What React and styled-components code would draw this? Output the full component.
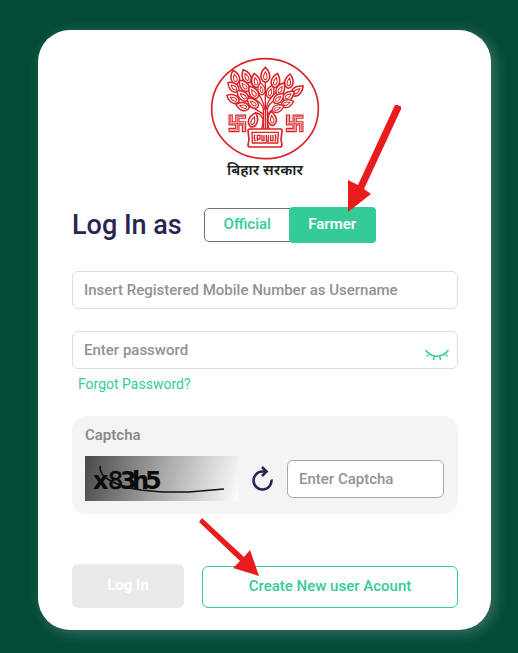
import React from "react";
import styled, { createGlobalStyle } from "styled-components";

const green = "#35cb99";
const navy = "#27264e";
const red = "#e81c1c";

const GlobalStyle = createGlobalStyle`
  *, *::before, *::after { box-sizing: border-box; }
  body {
    margin: 0;
    background: #044b37;
    font-family: Roboto, "Liberation Sans", sans-serif;
    font-size: 15px;
  }
  button, input { font: inherit; margin: 0; }
`;

const Page = styled.div`
  min-height: 100vh;
  padding: 30px 27px 23px 38px;
`;

const Card = styled.form`
  padding: 27px 33px 22px 34px;
  border-radius: 32px;
  background: #fff;
  box-shadow: 4px 3px 14px rgba(255, 255, 255, 0.22);
`;

const Brand = styled.div`
  display: flex;
  flex-direction: column;
  align-items: center;
  height: 150px;
`;

const BrandName = styled.div`
  font: 600 15px/22px "Noto Sans Devanagari", "Noto Sans", sans-serif;
  color: #222;
`;

const Header = styled.div`
  display: flex;
  align-items: center;
  gap: 22px;
  height: 36px;
  margin-bottom: 28px;
`;

const Title = styled.h1`
  margin: 0;
  font-size: 27px;
  font-weight: 500;
  line-height: 32px;
  color: ${navy};
`;

const Tabs = styled.div`
  display: flex;
  align-items: center;
`;

const Anchor = styled.div`
  position: relative;
  display: flex;
  flex: ${(p) => (p.$grow ? 1 : "none")};
`;

const Tab = styled.button`
  width: 87px;
  height: ${(p) => (p.$active ? 36 : 34)}px;
  margin-left: ${(p) => (p.$active ? -2 : 0)}px;
  padding: 0 0 2px;
  border: ${(p) => (p.$active ? "0" : "1px solid #707070")};
  border-radius: ${(p) => (p.$active ? "4px" : "5px 0 0 5px")};
  background: ${(p) => (p.$active ? green : "#fff")};
  color: ${(p) => (p.$active ? "#fff" : green)};
  font-weight: ${(p) => (p.$active ? 600 : 500)};
`;

const Field = styled.div`
  position: relative;
  margin-bottom: ${(p) => p.$gap || 0}px;
`;

const TextInput = styled.input`
  display: block;
  width: 100%;
  min-width: 0;
  height: 38px;
  padding: 0 11px;
  border: 1px solid ${(p) => (p.$dark ? "#a9a9a9" : "#dedede")};
  border-radius: 6px;
  background: #fff;
  font-weight: 500;
  color: #444;
  &::placeholder { color: #929292; opacity: 1; }
`;

const EyeButton = styled.button`
  position: absolute;
  right: 9px;
  top: 18px;
  display: flex;
  padding: 0;
  border: 0;
  background: none;
`;

const Forgot = styled.a`
  display: block;
  width: fit-content;
  margin: 5px 0 22px 6px;
  font-size: 14px;
  line-height: 20px;
  color: ${green};
  text-decoration: none;
`;

const CaptchaPanel = styled.div`
  padding: 9px 14px 13px 13px;
  border-radius: 14px;
  background: #f4f4f4;
  margin-bottom: 50px;
`;

const CaptchaLabel = styled.label`
  display: block;
  margin-bottom: 11px;
  font-weight: 600;
  line-height: 20px;
  color: #8b8b8b;
`;

const CaptchaRow = styled.div`
  display: flex;
  align-items: center;
`;

const CaptchaImage = styled.div`
  flex: none;
  width: 153px;
  height: 45px;
  background: linear-gradient(105deg, #484848, #a8a8a8 50%, #fcfcfc);
`;

const RefreshButton = styled.button`
  display: flex;
  margin: 0 13px;
  padding: 0;
  border: 0;
  background: none;
`;

const Actions = styled.div`
  display: flex;
  align-items: flex-end;
  gap: 18px;
`;

const LoginButton = styled.button`
  width: 112px;
  height: 44px;
  padding: 0 0 2px;
  border: 0;
  border-radius: 6px;
  background: #eaeaea;
  color: #fff;
  font-weight: 600;
`;

const CreateButton = styled.button`
  width: 100%;
  height: 42px;
  padding: 0 0 2px;
  border: 1px solid ${green};
  border-radius: 6px;
  background: #fff;
  color: ${green};
  font-weight: 500;
`;

const Pointer = styled.svg`
  position: absolute;
  left: ${(p) => p.$left}px;
  bottom: ${(p) => p.$bottom}px;
  pointer-events: none;
`;

const leaves = [
  [194, 76, 0, 1.1], [165, 93, -12, 1.05], [225, 93, 14, 1.05],
  [137, 80, -25, 1.05], [265, 95, 8, 1.05], [103, 83, -15, 1.05],
  [98, 112, -50, 1], [130, 108, -40, 1], [97, 147, -62, 1],
  [126, 138, -50, 1.05], [158, 128, -32, 1.05], [182, 118, -10, 0.9],
  [209, 126, 16, 0.95], [240, 118, 28, 1], [290, 123, 52, 1.05],
  [264, 138, 52, 1], [234, 146, 48, 0.95], [260, 161, 72, 0.95],
  [126, 170, -75, 1], [156, 160, -50, 1], [232, 176, 68, 0.9],
  [158, 211, 18, 1.1], [214, 207, -8, 1.05],
];

function Sign({ x, y }) {
  const d = "M-20-20V0H20V20M20-20H0V20H-20";
  return (
    <g transform={`translate(${x} ${y})`} fill="none" strokeLinecap="square">
      <path d={d} stroke="#d92326" strokeWidth="13" />
      <path d={d} stroke="#fff" strokeWidth="6" />
      <path d={d} stroke="#d92326" strokeWidth="2.5" />
    </g>
  );
}

function Emblem() {
  return (
    <svg width="110" height="104" viewBox="28 22 330 312" role="img" aria-label="Emblem">
      <ellipse cx="193" cy="177" rx="160" ry="150" fill="#fff" stroke="#d92326" strokeWidth="5" />
      <g fill="none" stroke="#d92326" strokeWidth="4" strokeLinecap="round">
        <path d="M188 238V180Q186 160 160 148L110 120M200 238V182Q202 160 228 150L282 128" />
        <path d="M188 195Q170 175 105 158M200 195Q218 172 258 162" />
        <path d="M191 178Q191 150 145 92M197 178Q197 145 258 104M194 238V92" />
        <path d="M188 210Q178 190 168 190M200 210Q210 194 214 190M182 238Q188 226 187 205M206 238Q200 226 201 205" />
      </g>
      <g fill="#fff" stroke="#d92326" strokeWidth="4.5">
        {leaves.map(([x, y, a, s]) => (
          <g key={`${x}-${y}`} transform={`translate(${x} ${y}) rotate(${a}) scale(${s})`}>
            <path d="M0-21C11-11 15 3 10 12Q6 19 0 20Q-6 19-10 12C-15 3-11-11 0-21Z" />
            <path d="M0-9Q8 4 3 11Q0 14-3 11Q-8 4 0-9Z" strokeWidth="3" />
          </g>
        ))}
      </g>
      <Sign x={110} y={221} />
      <Sign x={282} y={221} />
      <g fill="#fff" stroke="#d92326" strokeWidth="5">
        <path d="M142 242Q142 238 147 238H240Q245 238 244 243L241 270L244 286Q244 292 238 292H148Q142 292 142 286L145 270Z" />
        <path d="M154 248H233L231 280H155Z" strokeWidth="4" />
        <path
          d="M163 255Q158 264 164 275M170 274V257H178V268H170M184 256V273H190V257M197 256V274H203V257M210 256V273H217V256M223 254Q229 264 222 276"
          fill="none"
          strokeWidth="4"
        />
      </g>
    </svg>
  );
}

function ClosedEye() {
  return (
    <svg width="24" height="12" viewBox="0 0 24 12" fill="none" stroke={green} strokeWidth="1.5" strokeLinecap="round">
      <path d="M1 1.5C6 9 18 9 23 1.5M4.5 4.5L2 7M9.5 7L8.5 10.5M14.5 7L15.5 10.5M19.5 4.5L22 7" />
    </svg>
  );
}

function RefreshIcon() {
  return (
    <svg width="23" height="26" viewBox="0 0 23 26" fill="none" stroke={navy} strokeWidth="2.6">
      <path d="M20.5 13.5A9 9 0 1 1 11.5 5.5H15" />
      <path d="M11 1L15.5 5.5L11 10" />
    </svg>
  );
}

export default function App() {
  return (
    <>
      <GlobalStyle />
      <Page>
        <Card onSubmit={(e) => e.preventDefault()}>
          <Brand>
            <Emblem />
            <BrandName lang="hi">बिहार सरकार</BrandName>
          </Brand>
          <Header>
            <Title>Log In as</Title>
            <Tabs>
              <Tab type="button">Official</Tab>
              <Anchor>
                <Tab type="button" $active>Farmer</Tab>
                <Pointer $left={54} $bottom={30} width="56" height="110" viewBox="0 0 56 110" fill={red}>
                  <path d="M52.5 1L57 3L19 85L26 90L3 108V76L13 81L50 1Z" transform="translate(0 1)" />
                </Pointer>
              </Anchor>
            </Tabs>
          </Header>
          <Field $gap={22}>
            <TextInput aria-label="Username" placeholder="Insert Registered Mobile Number as Username" />
          </Field>
          <Field>
            <TextInput type="password" aria-label="Password" placeholder="Enter password" />
            <EyeButton type="button" aria-label="Show password">
              <ClosedEye />
            </EyeButton>
          </Field>
          <Forgot href="#forgot">Forgot Password?</Forgot>
          <CaptchaPanel>
            <CaptchaLabel htmlFor="captcha">Captcha</CaptchaLabel>
            <CaptchaRow>
              <CaptchaImage>
                <svg width="153" height="45" viewBox="0 0 153 45">
                  <g fontFamily="DejaVu Sans, sans-serif" fontSize="24" fill="#0b0b0b">
                    <text x="8" y="33" fontWeight="700">x</text>
                    <text x="23" y="33" stroke="#0b0b0b" strokeWidth="0.6">8</text>
                    <text x="35" y="33" fontWeight="700">3</text>
                    <text x="47" y="33" fontWeight="700">h</text>
                    <text x="60" y="33" fontWeight="700">5</text>
                  </g>
                  <path d="M15 10Q15 18 21 22Q34 31 56 34L77 36H104L139 33" fill="none" stroke="#111" strokeWidth="1.7" />
                </svg>
              </CaptchaImage>
              <RefreshButton type="button" aria-label="Refresh captcha">
                <RefreshIcon />
              </RefreshButton>
              <TextInput id="captcha" $dark placeholder="Enter Captcha" />
            </CaptchaRow>
          </CaptchaPanel>
          <Actions>
            <LoginButton type="submit">Log In</LoginButton>
            <Anchor $grow>
              <CreateButton type="button">Create New user Acount</CreateButton>
              <Pointer $left={-4} $bottom={30} width="62" height="62" viewBox="0 0 62 62" fill={red}>
                <path d="M4 2L46 41L52 34L61 60L35 52L42 45L1 6Z" />
              </Pointer>
            </Anchor>
          </Actions>
        </Card>
      </Page>
    </>
  );
}
